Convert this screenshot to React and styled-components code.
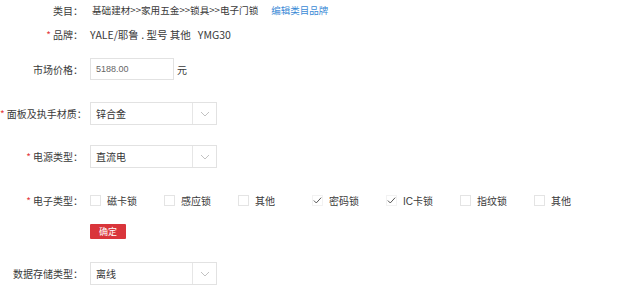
import React from "react";
import styled, { createGlobalStyle } from "styled-components";

const Global = createGlobalStyle`
  html, body { margin: 0; padding: 0; background: #fff; }
  body { font-family: "Noto Sans CJK SC", "Liberation Sans", sans-serif; color: #333; }
`;

const Form = styled.div`
  width: 640px;
  height: 295px;
  display: flex;
  flex-direction: column;
  overflow: hidden;
`;

const Row = styled.div`
  display: grid;
  grid-template-columns: 83px 1fr;
  column-gap: 7px;
  align-items: center;
  height: ${(p) => p.$h}px;
  margin-top: ${(p) => p.$mt || 0}px;
`;

const Label = styled.div`
  font-size: 10px;
  text-align: right;
  white-space: nowrap;
  color: #3a3a3a;
`;

const Star = styled.span`
  color: #e4393c;
  font-size: 10px;
  margin-right: 2px;
`;

const Value = styled.div`
  display: flex;
  align-items: center;
  font-size: ${(p) => p.$fs || 10.5}px;
  white-space: nowrap;
  padding-left: ${(p) => p.$pl || 0}px;
  color: #3a3a3a;
`;

const Link = styled.a`
  color: #3a8ad6;
  font-size: 9.5px;
  text-decoration: none;
  margin-left: 13px;
`;

const Input = styled.div`
  box-sizing: border-box;
  width: 84px;
  height: 22px;
  border: 1px solid #e2e2e2;
  display: flex;
  align-items: center;
  padding-left: 5px;
  font-family: "Liberation Sans", sans-serif;
  font-size: 9px;
  color: #666;
`;

const Unit = styled.span`
  font-size: 10px;
  margin-left: 3px;
`;

const Select = styled.div`
  box-sizing: border-box;
  width: 127px;
  height: 23px;
  border: 1px solid #e2e2e2;
  display: flex;
  align-items: stretch;
`;

const SelectText = styled.div`
  flex: 1;
  display: flex;
  align-items: center;
  padding-left: 5px;
  font-size: 10px;
  color: #333;
`;

const Arrow = styled.div`
  width: 23px;
  border-left: 1px solid #e6e6e6;
  display: flex;
  align-items: center;
  justify-content: center;
`;

const Checks = styled.div`
  display: flex;
  align-items: center;
`;

const CheckItem = styled.div`
  width: 74px;
  display: flex;
  align-items: center;
  gap: 6px;
  font-size: 10px;
  color: #3a3a3a;
  font-family: "Liberation Sans", "Noto Sans CJK SC", sans-serif;
`;

const Box = styled.div`
  box-sizing: border-box;
  width: 11px;
  height: 11px;
  border: 1px solid ${(p) => (p.$checked ? "#f2f2f2" : "#e4e4e4")};
  display: flex;
  align-items: center;
  justify-content: center;
`;

const Button = styled.div`
  width: 36px;
  height: 15px;
  background: #d9353b;
  color: #fff;
  font-size: 9px;
  display: flex;
  align-items: center;
  justify-content: center;
  border-radius: 1px;
`;

const Chevron = () => (
  <svg width="10" height="6" viewBox="0 0 10 6">
    <path d="M1 1 L5 5 L9 1" fill="none" stroke="#bbb" strokeWidth="0.9" />
  </svg>
);

const Tick = () => (
  <svg width="11" height="9" viewBox="0 0 11 9">
    <path d="M1 4.5 L4 7.5 L10 1" fill="none" stroke="#444" strokeWidth="1.1" />
  </svg>
);

const types = [
  { t: "磁卡锁", c: false },
  { t: "感应锁", c: false },
  { t: "其他", c: false },
  { t: "密码锁", c: true },
  { t: "IC卡锁", c: true },
  { t: "指纹锁", c: false },
  { t: "其他", c: false },
];

const SelectBox = ({ text }) => (
  <Select>
    <SelectText>{text}</SelectText>
    <Arrow>
      <Chevron />
    </Arrow>
  </Select>
);

export default function App() {
  return (
    <>
      <Global />
      <Form>
        <Row $h={20}>
          <Label>类目：</Label>
          <Value $pl={2} $fs={9.6}>
            基础建材&gt;&gt;家用五金&gt;&gt;锁具&gt;&gt;电子门锁
            <Link href="#">编辑类目品牌</Link>
          </Value>
        </Row>
        <Row $h={20} $mt={4}>
          <Label>
            <Star>*</Star>品牌：
          </Label>
          <Value>YALE/耶鲁 . 型号 其他&nbsp;&nbsp; YMG30</Value>
        </Row>
        <Row $h={22} $mt={14}>
          <Label>市场价格：</Label>
          <Value>
            <Input>5188.00</Input>
            <Unit>元</Unit>
          </Value>
        </Row>
        <Row $h={23} $mt={22}>
          <Label>
            <Star>*</Star>面板及执手材质：
          </Label>
          <Value>
            <SelectBox text="锌合金" />
          </Value>
        </Row>
        <Row $h={23} $mt={20}>
          <Label>
            <Star>*</Star>电源类型：
          </Label>
          <Value>
            <SelectBox text="直流电" />
          </Value>
        </Row>
        <Row $h={22} $mt={21}>
          <Label>
            <Star>*</Star>电子类型：
          </Label>
          <Checks>
            {types.map((it, i) => (
              <CheckItem key={i}>
                <Box $checked={it.c}>{it.c && <Tick />}</Box>
                {it.t}
              </CheckItem>
            ))}
          </Checks>
        </Row>
        <Row $h={15} $mt={13}>
          <span />
          <Value>
            <Button>确定</Button>
          </Value>
        </Row>
        <Row $h={23} $mt={23}>
          <Label>数据存储类型：</Label>
          <Value>
            <SelectBox text="离线" />
          </Value>
        </Row>
      </Form>
    </>
  );
}
